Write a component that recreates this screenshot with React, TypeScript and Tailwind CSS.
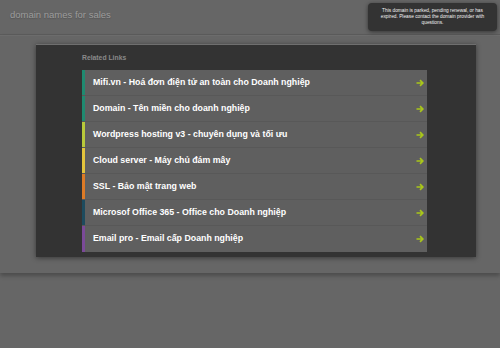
const links = [
  { label: 'Mifi.vn - Hoá đơn điện tử an toàn cho Doanh nghiệp', bar: 'bg-[#1f8a70]' },
  { label: 'Domain - Tên miền cho doanh nghiệp', bar: 'bg-[#1f8a70]' },
  { label: 'Wordpress hosting v3 - chuyên dụng và tối ưu', bar: 'bg-[#b8c93a]' },
  { label: 'Cloud server - Máy chủ đám mây', bar: 'bg-[#e3c43c]' },
  { label: 'SSL - Bảo mật trang web', bar: 'bg-[#dc7a26]' },
  { label: 'Microsof Office 365 - Office cho Doanh nghiệp', bar: 'bg-[#1d4b5e]' },
  { label: 'Email pro - Email cấp Doanh nghiệp', bar: 'bg-[#7b4a98]' },
]

const Arrow = () => (
  <svg width="8" height="8" viewBox="0 0 8 8" className="text-[#a9c61a]">
    <path d="M0.5 4h6M4 1.2L6.8 4 4 6.8" stroke="currentColor" strokeWidth="1.7" fill="none" />
  </svg>
)

export default function App() {
  return (
    <div className="relative w-[500px] h-[348px] bg-[#666666] font-['Liberation_Sans',Arial,sans-serif] overflow-hidden">
      <header className="h-[35px] border-b border-[#5c5c5c] flex items-center px-[10px]">
        <span className="text-[9.5px] text-[#9c9c9c] [text-shadow:0_1px_1px_#555] -mt-[3px]">domain names for sales</span>
      </header>

      <div className="absolute right-[3px] top-[3px] w-[129px] h-[28px] rounded-[4px] bg-[#333333] shadow-[0_1px_4px_rgba(0,0,0,0.5)] flex items-center justify-center text-center">
        <p className="text-[4.8px] leading-[6px] text-[#f2f2f2]">
          This domain is parked, pending renewal, or has
          <br />
          expired. Please contact the domain provider with
          <br />
          questions.
        </p>
      </div>

      <section className="h-[238px] pt-[8px] border-t border-[#6c6c6c] shadow-[0_3px_4px_rgba(0,0,0,0.25)]">
        <div className="ml-[36px] w-[440px] h-[213px] bg-[#333333] border-t border-[#6f6f6f] shadow-[0_1px_5px_rgba(0,0,0,0.45)] pl-[46px] pr-[49px] pt-[8px]">
          <p className="text-[6.8px] text-[#8a8a8a] font-bold h-[17px]">Related Links</p>
          <ul className="flex flex-col">
            {links.map((link) => (
              <li key={link.label} className="flex h-[26px] bg-[#5f5f5f] border-b border-[#585858] last:border-b-0">
                <span className={`w-[3px] shrink-0 ${link.bar}`} />
                <span className="flex-1 flex items-center pl-[8px] text-[8.8px] font-bold text-white">{link.label}</span>
                <span className="flex items-center pr-[3px]">
                  <Arrow />
                </span>
              </li>
            ))}
          </ul>
        </div>
      </section>
    </div>
  )
}
